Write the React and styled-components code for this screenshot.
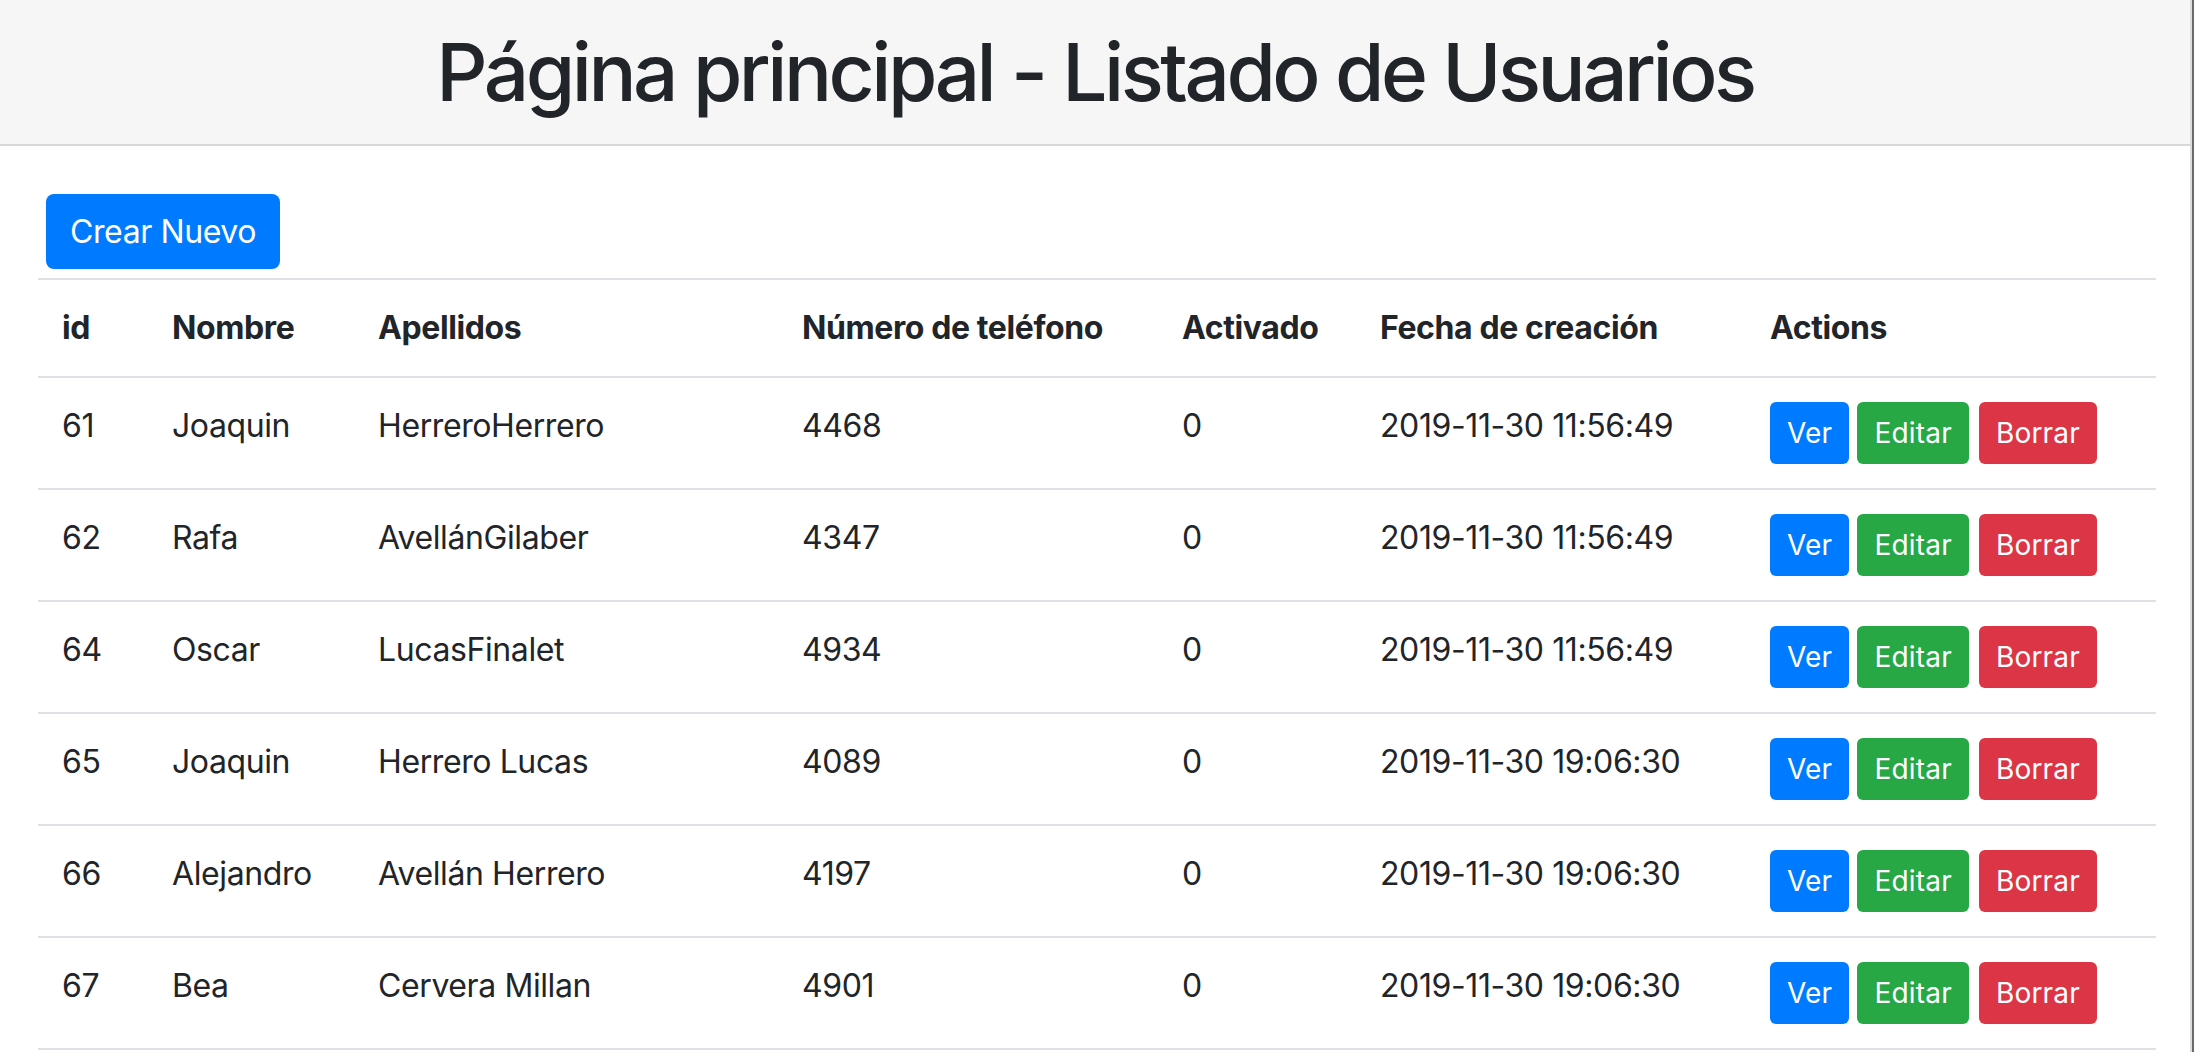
import React from "react";
import styled, { createGlobalStyle } from "styled-components";

const GlobalStyle = createGlobalStyle`
  html, body { margin: 0; padding: 0; background: #ffffff; }
  body {
    font-family: Inter, "Noto Sans", "Liberation Sans", sans-serif;
    color: #212529;
  }
  * { box-sizing: border-box; }
`;

const Window = styled.div`
  min-height: 100vh;
  border-right: 2px solid #6a6a6a;
  display: flex;
`;

const Main = styled.div`
  flex: 1;
  min-height: 100vh;
  border-right: 2px solid #dcdcdc;
  display: flex;
  flex-direction: column;
`;

const Header = styled.header`
  height: 146px;
  background: #f6f6f6;
  border-bottom: 2px solid #d8d8d8;
  display: flex;
  align-items: center;
  justify-content: center;
`;

const Title = styled.h1`
  margin: 0;
  font-size: 80px;
  font-weight: 500;
  line-height: 96px;
  color: #212529;
  letter-spacing: -3.5px;
`;

const Content = styled.main`
  padding: 48px 34px 0 38px;
`;

const Toolbar = styled.div`
  padding-left: 8px;
  margin-bottom: 9px;
`;

const colors = {
  primary: "#007bff",
  success: "#28a745",
  danger: "#dc3545",
};

const Button = styled.button`
  display: inline-flex;
  align-items: center;
  justify-content: center;
  border: none;
  color: #fff;
  background: ${(p) => colors[p.$variant]};
  font-family: inherit;
  font-weight: 400;
  cursor: pointer;
  height: ${(p) => (p.$small ? "62px" : "75px")};
  padding: ${(p) => (p.$small ? "0 17px" : "0 24px")};
  font-size: ${(p) => (p.$small ? "28px" : "32px")};
  border-radius: ${(p) => (p.$small ? "6px" : "8px")};
  margin-left: ${(p) => p.$offset || 0}px;
  letter-spacing: ${(p) => (p.$small ? "0.2px" : "-0.4px")};
`;

const Table = styled.table`
  width: 2118px;
  border-collapse: collapse;
  table-layout: fixed;
`;

const HeadCell = styled.th`
  text-align: left;
  font-size: 32px;
  font-weight: 700;
  line-height: 48px;
  padding: 24px;
  border-top: 2px solid #dee2e6;
  border-bottom: 2px solid #dee2e6;
  vertical-align: top;
  white-space: nowrap;
  letter-spacing: -0.4px;
`;

const Cell = styled.td`
  font-size: 32px;
  font-weight: 400;
  line-height: 48px;
  padding: 24px;
  border-bottom: 2px solid #dee2e6;
  vertical-align: top;
  white-space: nowrap;
  letter-spacing: -0.4px;
`;

const Actions = styled.div`
  display: flex;
  gap: 8px;
`;

const columns = [
  { label: "id", width: 110 },
  { label: "Nombre", width: 206 },
  { label: "Apellidos", width: 424 },
  { label: "Número de teléfono", width: 380 },
  { label: "Activado", width: 198 },
  { label: "Fecha de creación", width: 390 },
  { label: "Actions", width: 410 },
];

const users = [
  { id: 61, nombre: "Joaquin", apellidos: "HerreroHerrero", tel: "4468", act: "0", fecha: "2019-11-30 11:56:49" },
  { id: 62, nombre: "Rafa", apellidos: "AvellánGilaber", tel: "4347", act: "0", fecha: "2019-11-30 11:56:49" },
  { id: 64, nombre: "Oscar", apellidos: "LucasFinalet", tel: "4934", act: "0", fecha: "2019-11-30 11:56:49" },
  { id: 65, nombre: "Joaquin", apellidos: "Herrero Lucas", tel: "4089", act: "0", fecha: "2019-11-30 19:06:30" },
  { id: 66, nombre: "Alejandro", apellidos: "Avellán Herrero", tel: "4197", act: "0", fecha: "2019-11-30 19:06:30" },
  { id: 67, nombre: "Bea", apellidos: "Cervera Millan", tel: "4901", act: "0", fecha: "2019-11-30 19:06:30" },
];

export default function App() {
  return (
    <>
      <GlobalStyle />
      <Window>
        <Main>
          <Header>
            <Title>Página principal - Listado de Usuarios</Title>
          </Header>
          <Content>
            <Toolbar>
              <Button $variant="primary">Crear Nuevo</Button>
            </Toolbar>
            <Table>
              <colgroup>
                {columns.map((c) => (
                  <col key={c.label} style={{ width: c.width }} />
                ))}
              </colgroup>
              <thead>
                <tr>
                  {columns.map((c) => (
                    <HeadCell key={c.label}>{c.label}</HeadCell>
                  ))}
                </tr>
              </thead>
              <tbody>
                {users.map((u) => (
                  <tr key={u.id}>
                    <Cell>{u.id}</Cell>
                    <Cell>{u.nombre}</Cell>
                    <Cell>{u.apellidos}</Cell>
                    <Cell>{u.tel}</Cell>
                    <Cell>{u.act}</Cell>
                    <Cell>{u.fecha}</Cell>
                    <Cell>
                      <Actions>
                        <Button $small $variant="primary">Ver</Button>
                        <Button $small $variant="success">Editar</Button>
                        <Button $small $variant="danger" $offset={2}>Borrar</Button>
                      </Actions>
                    </Cell>
                  </tr>
                ))}
              </tbody>
            </Table>
          </Content>
        </Main>
      </Window>
    </>
  );
}
